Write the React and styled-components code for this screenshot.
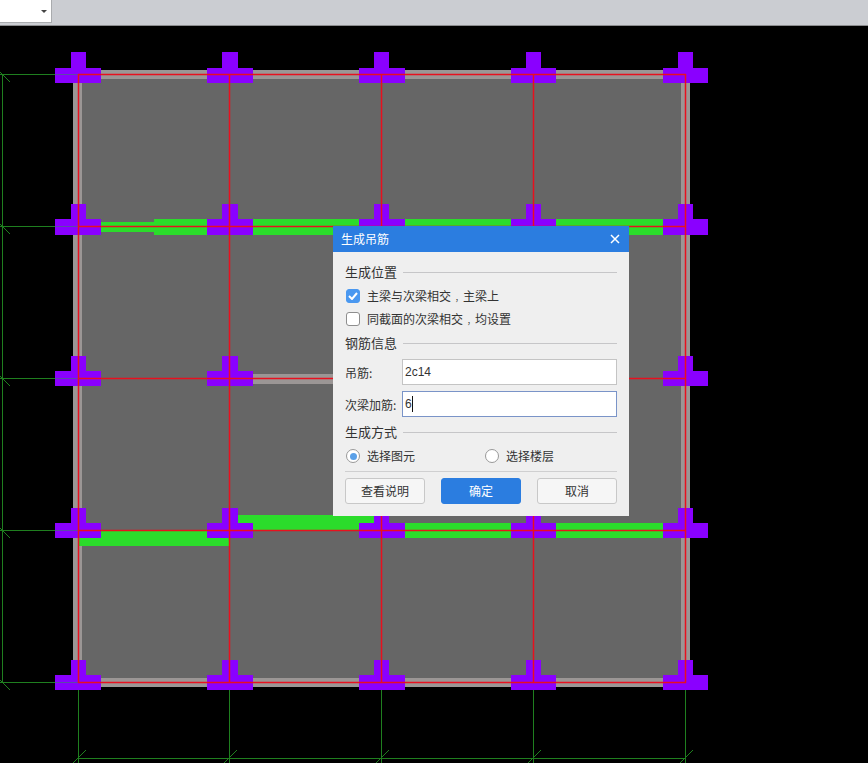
import React from "react";
import styled, { createGlobalStyle } from "styled-components";

const GlobalStyle = createGlobalStyle`
  html, body {
    margin: 0;
    height: 100%;
    background: #000;
    overflow: hidden;
  }
  * {
    box-sizing: border-box;
  }
`;

const Page = styled.div`
  position: relative;
  width: 868px;
  height: 763px;
  display: flex;
  flex-direction: column;
  background: #000;
  font-family: "Noto Sans CJK SC", "Liberation Sans", sans-serif;
  color: #333;
`;

const Toolbar = styled.div`
  height: 26px;
  flex: none;
  background: #cbcdd2;
  border-bottom: 1px solid #8b8c8e;
`;

const Combo = styled.div`
  width: 52px;
  height: 23px;
  background: #fff;
  border-right: 1px solid #a9abae;
  border-bottom: 1px solid #a9abae;
  display: flex;
  align-items: center;
  justify-content: flex-end;
  padding-right: 4px;
`;

const ComboArrow = styled.span`
  width: 0;
  height: 0;
  border-left: 3px solid transparent;
  border-right: 3px solid transparent;
  border-top: 3px solid #444;
`;

const Drawing = styled.svg`
  display: block;
  flex: 1;
  width: 868px;
  height: 737px;
  shape-rendering: crispEdges;
`;

const CentreLine = styled.rect`
  shape-rendering: auto;
  fill: #e8101f;
`;

const Dialog = styled.div`
  position: absolute;
  left: 333px;
  top: 226px;
  width: 296px;
  height: 290px;
  background: #efefef;
  display: flex;
  flex-direction: column;
`;

const DialogHeader = styled.div`
  height: 26px;
  flex: none;
  background: #2b7de0;
  color: #fff;
  font-size: 12px;
  padding: 0 9px 1px 8px;
  display: flex;
  align-items: center;
  justify-content: space-between;
`;

const DialogBody = styled.div`
  flex: 1;
  padding: 11px 12px 0;
  display: flex;
  flex-direction: column;
`;

const Section = styled.div`
  height: 19px;
  flex: none;
  font-size: 13px;
  line-height: 18px;
  padding-bottom: 1px;
  margin-top: ${(p) => p.$top || 0}px;
  display: flex;
  align-items: center;
  gap: 6px;
  color: #333;
  &::after {
    content: "";
    flex: 1;
    height: 1px;
    margin-top: 1px;
    background: #c6c6c8;
  }
`;

const CheckRow = styled.div`
  height: 22px;
  flex: none;
  margin-top: ${(p) => p.$top}px;
  display: flex;
  align-items: center;
  gap: 7px;
  padding-left: 1px;
  font-size: 12px;
`;

const OptionText = styled.span`
  margin-bottom: 2px;
  white-space: nowrap;
`;

const Comma = styled.span`
  display: inline-block;
  font-size: 8px;
  padding-left: 4px;
`;

const Box = styled.span`
  width: 14px;
  height: 14px;
  border-radius: 3px;
  flex: none;
  display: flex;
  align-items: center;
  justify-content: center;
  background: ${(p) => (p.$checked ? "#4a98f0" : "#fff")};
  border: 1px solid ${(p) => (p.$checked ? "#4a98f0" : "#8e8e8e")};
`;

const FieldRow = styled.div`
  height: 26px;
  flex: none;
  display: flex;
  align-items: center;
  font-size: 12px;
  margin-top: ${(p) => p.$top}px;
`;

const FieldLabel = styled.span`
  width: 57px;
  flex: none;
  white-space: nowrap;
`;

const Field = styled.div`
  flex: 1;
  height: 26px;
  background: #fff;
  border: 1px solid ${(p) => (p.$focused ? "#7a94c8" : "#c4c4c4")};
  padding-left: 2px;
  font-family: "Liberation Sans", sans-serif;
  font-size: 12px;
  display: flex;
  align-items: center;
`;

const Caret = styled.span`
  width: 1px;
  height: 16px;
  background: #111;
`;

const RadioGroup = styled.div`
  height: 24px;
  flex: none;
  margin-top: 2px;
  display: grid;
  grid-template-columns: 139px 1fr;
  font-size: 12px;
`;

const RadioItem = styled.div`
  display: flex;
  align-items: center;
  gap: 7px;
  padding-left: 1px;
`;

const Radio = styled.span`
  width: 14px;
  height: 14px;
  border-radius: 50%;
  background: #fff;
  border: 1px solid #999;
  flex: none;
  display: flex;
  align-items: center;
  justify-content: center;
  &::after {
    content: "";
    width: 7px;
    height: 7px;
    border-radius: 50%;
    background: ${(p) => (p.$on ? "#5aa0e8" : "transparent")};
  }
`;

const Footer = styled.div`
  margin-top: 3px;
  padding-top: 6px;
  border-top: 1px solid #cfcfd0;
  display: flex;
  justify-content: space-between;
`;

const Button = styled.div`
  width: 80px;
  height: 26px;
  border-radius: 3px;
  font-size: 12px;
  padding-bottom: 1px;
  display: flex;
  align-items: center;
  justify-content: center;
  background: ${(p) => (p.$primary ? "#2b7de0" : "#f6f6f6")};
  color: ${(p) => (p.$primary ? "#fff" : "#333")};
  border: 1px solid ${(p) => (p.$primary ? "#2b7de0" : "#c8c8c8")};
`;

const xs = [78, 229, 381, 533, 685];
const ys = [74, 226, 378, 530, 682];

const PURPLE = "#8a00ff";
const GREEN = "#2bdc2b";
const AXIS = "#1f7f1f";

// T shaped columns, bar x / bar width / stem x / stem width
const columnsX = [
  [55, 46, 71, 15],
  [207, 46, 222, 16],
  [359, 46, 374, 15],
  [511, 45, 526, 15],
  [663, 45, 678, 15],
];
// stem top / bar top / bar bottom
const columnsY = [
  [52, 68, 83],
  [204, 219, 235],
  [356, 371, 386],
  [508, 523, 538],
  [660, 675, 690],
];

// green beams: x, y, width, height
const beams = [
  [101, 222, 53, 10],
  [154, 219, 53, 16],
  [253, 219, 106, 16],
  [405, 219, 106, 16],
  [556, 219, 107, 16],
  [79, 531, 150, 15],
  [238, 515, 136, 15],
  [405, 523, 106, 15],
  [556, 523, 107, 15],
];

const Plan = () => (
  <Drawing viewBox="0 26 868 737">
    {/* slab */}
    <rect x="73" y="70" width="617" height="617" fill="#9b9695" />
    <rect x="82" y="79" width="599" height="599" fill="#666666" />
    <rect x="253" y="374" width="122" height="10" fill="#9b9695" />

    {/* axis lines */}
    <rect x="2" y="74" width="1" height="609" fill={AXIS} />
    {ys.map((y) => (
      <g key={y}>
        <rect x="0" y={y} width="56" height="1" fill={AXIS} />
        <line x1="0" y1={y - 2} x2="10" y2={y + 8} stroke={AXIS} shapeRendering="auto" />
      </g>
    ))}
    <rect x="78" y="758" width="608" height="1" fill={AXIS} />
    {xs.map((x) => (
      <g key={x}>
        <rect x={x} y="688" width="1" height="75" fill={AXIS} />
        <line x1={x - 6} y1="764" x2={x + 8} y2="750" stroke={AXIS} shapeRendering="auto" />
      </g>
    ))}

    {beams.map(([x, y, w, h]) => (
      <rect key={`${x}-${y}`} x={x} y={y} width={w} height={h} fill={GREEN} />
    ))}

    {/* columns */}
    {columnsY.map(([stemTop, barTop, barBottom]) =>
      columnsX.map(([barX, barW, stemX, stemW]) => (
        <g key={`${barX}-${barTop}`}>
          <rect x={stemX} y={stemTop} width={stemW} height={barTop - stemTop} fill={PURPLE} />
          <rect x={barX} y={barTop} width={barW} height={barBottom - barTop} fill={PURPLE} />
        </g>
      ))
    )}
    {ys.map((y) => (
      <rect key={y} x="55" y={y} width="23" height="1" fill="#5c4aa8" />
    ))}

    {/* beam centre lines */}
    {ys.map((y) => (
      <CentreLine key={y} x="78" y={y - 0.25} width="608" height="1.5" />
    ))}
    {xs.map((x) => (
      <CentreLine key={x} x={x - 0.25} y="74" width="1.5" height="609" />
    ))}
  </Drawing>
);

const App = () => (
  <Page>
    <GlobalStyle />
    <Toolbar>
      <Combo>
        <ComboArrow />
      </Combo>
    </Toolbar>
    <Plan />
    <Dialog>
      <DialogHeader>
        <span>生成吊筋</span>
        <svg width="10" height="10" viewBox="0 0 10 10">
          <path d="M1 1L9 9M9 1L1 9" stroke="#fff" strokeWidth="1.5" fill="none" />
        </svg>
      </DialogHeader>
      <DialogBody>
        <Section>生成位置</Section>
        <CheckRow $top={3}>
          <Box $checked>
            <svg width="10" height="8" viewBox="0 0 10 8">
              <path d="M1 4L4 7L9 1" stroke="#fff" strokeWidth="2" fill="none" />
            </svg>
          </Box>
          <OptionText>
            主梁与次梁相交<Comma>，</Comma>主梁上
          </OptionText>
        </CheckRow>
        <CheckRow $top={1}>
          <Box />
          <OptionText>
            同截面的次梁相交<Comma>，</Comma>均设置
          </OptionText>
        </CheckRow>
        <Section $top={4}>钢筋信息</Section>
        <FieldRow $top={6}>
          <FieldLabel>吊筋:</FieldLabel>
          <Field>2c14</Field>
        </FieldRow>
        <FieldRow $top={6}>
          <FieldLabel>次梁加筋:</FieldLabel>
          <Field $focused>
            6
            <Caret />
          </Field>
        </FieldRow>
        <Section $top={6}>生成方式</Section>
        <RadioGroup>
          <RadioItem>
            <Radio $on />
            <OptionText>选择图元</OptionText>
          </RadioItem>
          <RadioItem>
            <Radio />
            <OptionText>选择楼层</OptionText>
          </RadioItem>
        </RadioGroup>
        <Footer>
          <Button>查看说明</Button>
          <Button $primary>确定</Button>
          <Button>取消</Button>
        </Footer>
      </DialogBody>
    </Dialog>
  </Page>
);

export default App;
